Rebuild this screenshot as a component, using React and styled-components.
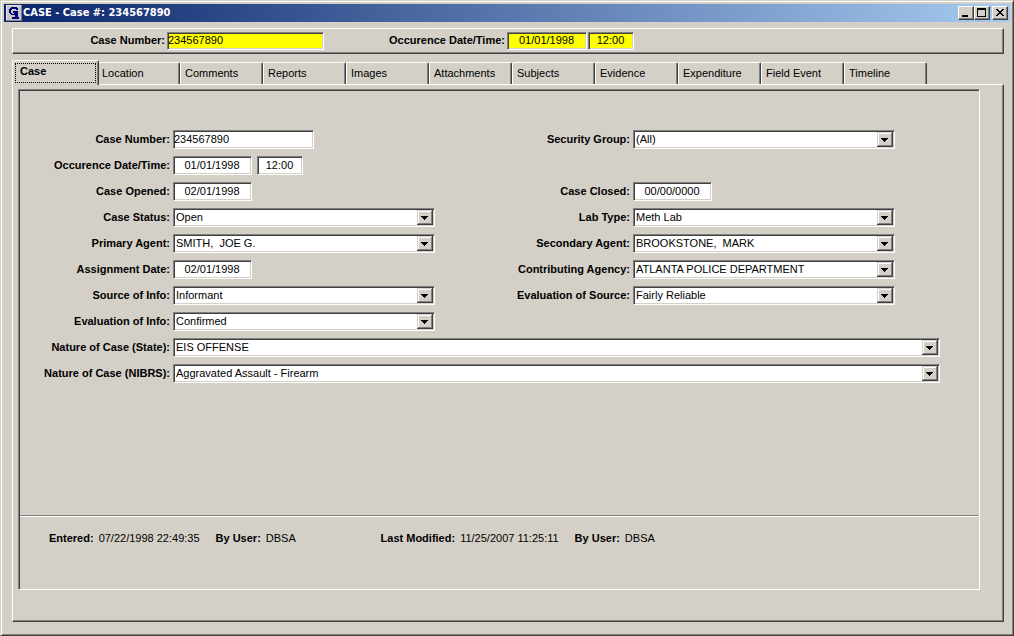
import { useState } from "react";
import styled, { createGlobalStyle, css } from "styled-components";

const colors = {
  face: "#d4d0c8",
  light: "#ffffff",
  shade: "#808080",
  dark: "#404040",
  highlight: "#ffff00",
};

const raised = css`
  border: 1px solid;
  border-color: ${colors.light} ${colors.dark} ${colors.dark} ${colors.light};
  box-shadow: inset -1px -1px 0 ${colors.shade};
`;

const sunken = css`
  border: 1px solid;
  border-color: ${colors.shade} ${colors.light} ${colors.light} ${colors.shade};
  box-shadow: inset 1px 1px 0 ${colors.dark}, inset -1px -1px 0 ${colors.face};
`;

const tabs = [
  "Case",
  "Location",
  "Comments",
  "Reports",
  "Images",
  "Attachments",
  "Subjects",
  "Evidence",
  "Expenditure",
  "Field Event",
  "Timeline",
];

// side: 1 = left column of the form, 3 = right column
const fields = [
  { id: "caseNumber", label: "Case Number:", row: 1, side: 1, type: "text", value: "234567890" },
  { id: "securityGroup", label: "Security Group:", row: 1, side: 3, type: "select", value: "(All)" },
  { id: "occurence", label: "Occurence Date/Time:", row: 2, side: 1, type: "date", value: "01/01/1998", time: "12:00" },
  { id: "opened", label: "Case Opened:", row: 3, side: 1, type: "date", value: "02/01/1998" },
  { id: "closed", label: "Case Closed:", row: 3, side: 3, type: "date", value: "00/00/0000" },
  { id: "status", label: "Case Status:", row: 4, side: 1, type: "select", value: "Open" },
  { id: "labType", label: "Lab Type:", row: 4, side: 3, type: "select", value: "Meth Lab" },
  { id: "primary", label: "Primary Agent:", row: 5, side: 1, type: "select", value: "SMITH,  JOE G." },
  { id: "secondary", label: "Secondary Agent:", row: 5, side: 3, type: "select", value: "BROOKSTONE,  MARK" },
  { id: "assigned", label: "Assignment Date:", row: 6, side: 1, type: "date", value: "02/01/1998" },
  { id: "agency", label: "Contributing Agency:", row: 6, side: 3, type: "select", value: "ATLANTA POLICE DEPARTMENT" },
  { id: "source", label: "Source of Info:", row: 7, side: 1, type: "select", value: "Informant" },
  { id: "evalSource", label: "Evaluation of Source:", row: 7, side: 3, type: "select", value: "Fairly Reliable" },
  { id: "evalInfo", label: "Evaluation of Info:", row: 8, side: 1, type: "select", value: "Confirmed" },
  { id: "natureState", label: "Nature of Case (State):", row: 9, side: 1, type: "select", wide: true, value: "EIS OFFENSE" },
  { id: "natureNibrs", label: "Nature of Case (NIBRS):", row: 10, side: 1, type: "select", wide: true, value: "Aggravated Assault - Firearm" },
];

const Dropdown = ({ id, value }) => (
  <SelectBox>
    <Select id={id} defaultValue={value}>
      <option value={value}>{value.replace(/ {2}/g, "\u00a0 ")}</option>
    </Select>
    <Arrow viewBox="0 0 16 15" shapeRendering="crispEdges" aria-hidden="true">
      <rect width="16" height="15" fill={colors.dark} />
      <rect width="15" height="14" fill={colors.face} />
      <path d="M1 1h13v1H2v11H1z" fill={colors.light} />
      <path d="M14 1h1v13H1v-1h13z" fill={colors.shade} />
      <path d="M4 6h7v1h-1v1h-1v1h-1v1h-1v-1h-1v-1h-1v-1h-1z" fill="#000" />
    </Arrow>
  </SelectBox>
);

const Field = ({ field }) => (
  <>
    <FieldLabel htmlFor={field.id} $row={field.row} $side={field.side}>
      {field.label}
    </FieldLabel>
    <FieldCell $row={field.row} $side={field.side} $wide={field.wide}>
      {field.type === "select" && <Dropdown id={field.id} value={field.value} />}
      {field.type === "text" && <TextInput id={field.id} $width={141} defaultValue={field.value} />}
      {field.type === "date" && (
        <TextInput id={field.id} $width={79} $center defaultValue={field.value} />
      )}
      {field.time && (
        <TextInput $width={46} $center aria-label="Occurence time" defaultValue={field.time} />
      )}
    </FieldCell>
  </>
);

const App = () => {
  const [activeTab, setActiveTab] = useState("Case");

  return (
    <>
      <GlobalStyle />
      <Window>
        <TitleBar>
          <Logo viewBox="0 0 16 16" shapeRendering="crispEdges" aria-hidden="true">
            <rect width="16" height="16" fill={colors.shade} />
            <rect width="15" height="15" fill="#e4e4e4" />
            <rect x="1" y="1" width="14" height="14" fill="#c6c6ca" />
            <path
              d="M5 2h6v1h1v2h-2V4H6v1H5v3h1v1h2V8H7V6h5v6h1v2H6v-2h3v-2H5V9H4V8H3V4h1V3h1z"
              fill="#00007c"
            />
          </Logo>
          <Title>CASE - Case #: 234567890</Title>
          <WindowButton aria-label="Minimize">
            <svg width="12" height="10" shapeRendering="crispEdges">
              <path d="M2 7h6v2H2z" />
            </svg>
          </WindowButton>
          <WindowButton aria-label="Maximize">
            <svg width="12" height="10" shapeRendering="crispEdges">
              <path d="M1 0h9v9H1zM2 2v6h7V2z" fillRule="evenodd" />
            </svg>
          </WindowButton>
          <WindowButton aria-label="Close" $apart>
            <svg width="12" height="10" shapeRendering="crispEdges">
              <path d="M2 1h2v1h1v1h2V2h1V1h2v1H9v1H8v1H7v1h1v1h1v1h1v1H8V7H7V6H5v1H4v1H2V7h1V6h1V5h1V4H4V3H3V2H2z" />
            </svg>
          </WindowButton>
        </TitleBar>

        <Summary>
          <SummaryLabel htmlFor="summaryNumber" $width={152}>Case Number:</SummaryLabel>
          <TextInput id="summaryNumber" $width={157} $yellow readOnly value="234567890" />
          <SummaryLabel htmlFor="summaryDate" $width={181}>Occurence Date/Time:</SummaryLabel>
          <SummaryDates>
            <TextInput id="summaryDate" $width={80} $center $yellow readOnly value="01/01/1998" />
            <TextInput
              $width={46}
              $center
              $yellow
              readOnly
              aria-label="Occurence time"
              value="12:00"
            />
          </SummaryDates>
        </Summary>

        <TabList role="tablist">
          {tabs.map((tab) => (
            <Tab
              key={tab}
              role="tab"
              aria-selected={tab === activeTab}
              $active={tab === activeTab}
              onClick={() => setActiveTab(tab)}
            >
              <TabText $active={tab === activeTab}>{tab}</TabText>
            </Tab>
          ))}
        </TabList>

        <TabPage role="tabpanel">
          <Panel>
            <Form>
              {fields.map((field) => (
                <Field key={field.id} field={field} />
              ))}
            </Form>
            <Footer>
              <Stamp>
                <b>Entered:</b>
                <span>07/22/1998 22:49:35</span>
              </Stamp>
              <Stamp $width={149}>
                <b>By User:</b>
                <span>DBSA</span>
              </Stamp>
              <Stamp>
                <b>Last Modified:</b>
                <span>11/25/2007 11:25:11</span>
              </Stamp>
              <Stamp>
                <b>By User:</b>
                <span>DBSA</span>
              </Stamp>
            </Footer>
          </Panel>
        </TabPage>
      </Window>
    </>
  );
};

const GlobalStyle = createGlobalStyle`
  * {
    box-sizing: border-box;
  }

  body {
    margin: 0;
    background: ${colors.face};
    color: #000;
    font: 11px/13px "Liberation Sans", Arial, sans-serif;
  }

  input, select, button {
    font: inherit;
    color: inherit;
  }
`;

const Window = styled.div`
  display: flex;
  flex-direction: column;
  min-height: 100vh;
  padding: 3px 3px 13px 3px;
  border: 1px solid;
  border-color: ${colors.face} ${colors.dark} ${colors.dark} ${colors.face};
  box-shadow: inset 1px 1px 0 ${colors.light}, inset -1px -1px 0 ${colors.shade};
`;

const TitleBar = styled.header`
  display: flex;
  align-items: center;
  height: 18px;
  padding: 0 2px;
  background: linear-gradient(90deg, #0a246a, #a6caf0);
`;

const Logo = styled.svg`
  width: 16px;
  height: 16px;
`;

const Title = styled.h1`
  flex: 1;
  margin: 0 0 0 1px;
  color: #fff;
  font: bold 11px/16px "DejaVu Sans Condensed", "DejaVu Sans", sans-serif;
  white-space: nowrap;
`;

const WindowButton = styled.button`
  display: flex;
  width: 16px;
  height: 14px;
  margin-left: ${(props) => (props.$apart ? "2px" : "0")};
  padding: 1px;
  background: ${colors.face};
  ${raised}
`;

const Summary = styled.section`
  display: flex;
  align-items: center;
  height: 26px;
  margin: 6px 6px 0 8px;
  ${raised}
`;

const SummaryLabel = styled.label`
  width: ${(props) => props.$width}px;
  margin-right: 2px;
  padding-bottom: 1px;
  font-weight: bold;
  text-align: right;
`;

const SummaryDates = styled.div`
  display: flex;
  gap: 1px;
`;

const TextInput = styled.input`
  width: ${(props) => props.$width}px;
  height: ${(props) => (props.$yellow ? "18px" : "19px")};
  padding: 0 1px 2px 0;
  border-radius: 0;
  outline: none;
  background: ${(props) => (props.$yellow ? colors.highlight : colors.light)};
  text-align: ${(props) => (props.$center ? "center" : "left")};
  ${sunken}
`;

const TabList = styled.div`
  display: flex;
  align-items: flex-end;
  height: 24px;
  margin: 6px 6px 0 8px;
`;

const Tab = styled.button`
  width: 83px;
  height: 22px;
  padding: 0 4px;
  background: ${colors.face};
  text-align: left;
  border: 1px solid;
  border-color: ${colors.light} ${colors.dark} ${colors.face} ${colors.light};
  border-bottom: 0;
  border-radius: 2px 2px 0 0;
  box-shadow: inset -1px 0 0 ${colors.shade};

  ${(props) =>
    props.$active &&
    css`
      z-index: 1;
      width: 87px;
      height: 25px;
      margin: 0 -2px -1px 0;
      padding: 1px 2px 2px;
      font-weight: bold;
    `}
`;

const TabText = styled.span`
  display: block;
  ${(props) =>
    props.$active &&
    css`
      height: 20px;
      padding: 1px 4px;
      border: 1px dotted #000;
    `}
`;

const TabPage = styled.main`
  display: flex;
  flex: 1;
  margin: 0 6px 0 8px;
  padding: 4px 23px 31px 5px;
  ${raised}
`;

const Panel = styled.div`
  display: flex;
  flex: 1;
  flex-direction: column;
  padding: 1px;
  ${sunken}
`;

const Form = styled.form`
  display: grid;
  flex: 1;
  grid-template-columns: 150px 1fr 192px 1fr 42px;
  grid-auto-rows: 19px;
  gap: 7px 3px;
  padding: 39px 38px 0 0;
`;

const FieldLabel = styled.label`
  grid-row: ${(props) => props.$row};
  grid-column: ${(props) => props.$side};
  align-self: center;
  font-weight: bold;
  text-align: right;
  white-space: nowrap;
`;

const FieldCell = styled.div`
  display: flex;
  gap: 5px;
  grid-row: ${(props) => props.$row};
  grid-column: ${(props) => (props.$wide ? "2 / 6" : props.$side + 1)};
`;

const SelectBox = styled.div`
  display: grid;
  flex: 1;
  padding: 1px;
  background: ${colors.light};
  ${sunken}
`;

const Select = styled.select`
  grid-area: 1 / 1;
  width: 100%;
  height: 15px;
  padding: 0 18px 0 1px;
  border: 0;
  outline: none;
  appearance: none;
  background: transparent;
`;

const Arrow = styled.svg`
  grid-area: 1 / 1;
  justify-self: end;
  width: 16px;
  height: 15px;
  pointer-events: none;
`;

const Footer = styled.footer`
  display: flex;
  align-items: flex-start;
  gap: 16px;
  height: 73px;
  padding: 16px 29px 0;
  border-top: 1px solid ${colors.shade};
  box-shadow: inset 0 1px 0 ${colors.light};
`;

const Stamp = styled.div`
  display: flex;
  gap: 5px;
  min-width: ${(props) => (props.$width ? `${props.$width}px` : "0")};
`;

export default App;
